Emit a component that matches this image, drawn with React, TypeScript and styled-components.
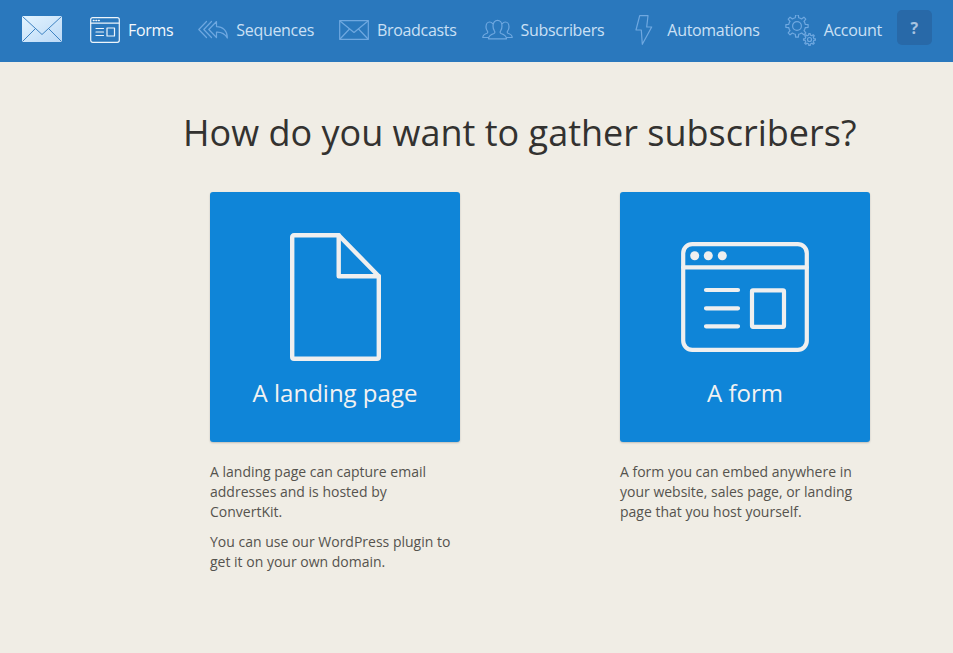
import React from 'react';
import styled, { createGlobalStyle } from 'styled-components';

const GlobalStyle = createGlobalStyle`
  html, body {
    margin: 0;
    padding: 0;
    background-color: #f0ede5;
    font-family: "Open Sans", "Liberation Sans", sans-serif;
  }
`;

const TopBar = styled.nav`
  height: 62px;
  box-sizing: border-box;
  padding: 0 22px;
  display: flex;
  align-items: center;
  background-color: #2a78bd;
`;

const Logo = styled.svg`
  display: block;
  flex: none;
  margin: 0 28px 4px 0;
`;

const NavList = styled.div`
  display: flex;
  align-items: center;
  gap: 25px;
  margin-bottom: 2px;
`;

const NavItem = styled.a<{ $active?: boolean }>`
  display: flex;
  align-items: center;
  gap: 8px;
  font-size: 16px;
  line-height: 22px;
  letter-spacing: -0.31px;
  white-space: nowrap;
  color: ${props => (props.$active ? '#f4f8fc' : '#cbe0f5')};
  svg {
    display: block;
    flex: none;
    fill: none;
    stroke: ${props => (props.$active ? '#eef5fb' : '#6fa8e0')};
    stroke-width: 1.2;
    stroke-linejoin: round;
    stroke-linecap: round;
  }
`;

const HelpButton = styled.button`
  flex: none;
  width: 35px;
  height: 35px;
  margin: 0 0 7px 15px;
  border: 0;
  padding: 0;
  border-radius: 5px;
  background-color: #2869a8;
  color: #a8c3e0;
  font-family: inherit;
  font-size: 16px;
  font-weight: 700;
`;

const Main = styled.main`
  padding: 46px 0 0 183px;
`;

const Title = styled.h1`
  margin: 0 0 34px;
  font-size: 36px;
  line-height: 50px;
  font-weight: 400;
  color: #333230;
`;

const Options = styled.div`
  display: grid;
  grid-template-columns: 250px 250px;
  column-gap: 160px;
  margin-left: 27px;
`;

const OptionCard = styled.a`
  display: block;
`;

const Tile = styled.div`
  height: 250px;
  box-sizing: border-box;
  display: flex;
  flex-direction: column;
  align-items: center;
  border-radius: 3px;
  background-color: #0f85d8;
  box-shadow: 0 1px 2px rgba(0, 0, 0, 0.2);
`;

const IconSlot = styled.div<{ $top: number }>`
  height: 187px;
  box-sizing: border-box;
  padding-top: ${props => props.$top}px;
  svg {
    display: block;
    fill: none;
    stroke: #efefef;
    stroke-linejoin: round;
    stroke-linecap: round;
  }
`;

const TileLabel = styled.div`
  font-size: 24px;
  line-height: 28px;
  color: #f2f2f2;
`;

const Description = styled.p`
  margin: 0 0 10px;
  font-size: 14px;
  line-height: 20px;
  color: #55534e;
  &:first-of-type {
    margin-top: 20px;
  }
`;

const gearPath = (cx: number, cy: number, outer: number, inner: number, teeth: number) => {
  const points: string[] = [];
  const step = (Math.PI * 2) / teeth;
  for (let i = 0; i < teeth; i++) {
    const a = i * step;
    const corners: [number, number][] = [
      [inner, a - step * 0.5],
      [inner, a - step * 0.26],
      [outer, a - step * 0.15],
      [outer, a + step * 0.15],
      [inner, a + step * 0.26]
    ];
    corners.forEach(([r, t]) => {
      points.push(`${(cx + r * Math.cos(t)).toFixed(2)} ${(cy + r * Math.sin(t)).toFixed(2)}`);
    });
  }
  return `M${points.join('L')}Z`;
};

const FormsIcon = () => (
  <svg width="30" height="26" viewBox="0 0 30 26">
    <rect x="0.7" y="0.7" width="28.6" height="24.6" rx="2" />
    <path d="M1 6.2H29" />
    <path d="M6 11.5H13.5M6 15H13.5M6 18.5H13.5" />
    <rect x="17" y="11" width="7.5" height="8" />
    <path d="M3.4 3.5H4M6 3.5H6.6M8.6 3.5H9.2" strokeWidth="1.6" />
  </svg>
);

const SequencesIcon = () => (
  <svg width="30" height="26" viewBox="0 0 30 26">
    <path d="M8.5 4.5L0.8 12.5L8.5 20.5" />
    <path d="M13.5 4.5L5.8 12.5L13.5 20.5" />
    <path d="M18.5 4.5L10.8 12.5L18.5 20.5V15.2C23 15 27 16.8 29.3 21C29.5 14 25 9.6 18.5 9.6Z" />
  </svg>
);

const BroadcastsIcon = () => (
  <svg width="30" height="20" viewBox="0 0 30 20">
    <rect x="0.7" y="0.7" width="28.6" height="18.6" />
    <path d="M1 1L15 12.5L29 1" />
    <path d="M1 19L10.5 9M29 19L19.5 9" />
  </svg>
);

const SubscribersIcon = () => (
  <svg width="31" height="22" viewBox="0 0 31 22">
    <path d="M6.5 18.5H0.8C0.8 16 2.6 15 5 14.2C6 13.8 5.8 12.6 5.3 12C4.4 10.8 4 9.6 4 8C4 5.2 5.6 3 7.6 3C8.8 3 9.8 3.6 10.6 4.6" />
    <path d="M24.5 18.5H30.2C30.2 16 28.4 15 26 14.2C25 13.8 25.2 12.6 25.7 12C26.6 10.8 27 9.6 27 8C27 5.2 25.4 3 23.4 3C22.2 3 21.2 3.6 20.4 4.6" />
    <path d="M6.5 19.8C6.5 16.5 9 15.5 12 14.5C13.2 14 13 12.6 12.4 11.8C11.4 10.4 11 9 11 7C11 3.6 13 1.4 15.5 1.4C18 1.4 20 3.6 20 7C20 9 19.6 10.4 18.6 11.8C18 12.6 17.8 14 19 14.5C22 15.5 24.5 16.5 24.5 19.8Z" />
  </svg>
);

const AutomationsIcon = () => (
  <svg width="30" height="30" viewBox="0 0 30 30">
    <path d="M10.7 0.7L7 15H12.3L13.3 29.3L22.7 12H17.7L19 0.7Z" />
  </svg>
);

const AccountIcon = () => (
  <svg width="31" height="31" viewBox="0 0 31 31">
    <path d={gearPath(12, 11, 11.2, 8.4, 8)} />
    <circle cx="12" cy="11" r="4.4" />
    <path d={gearPath(24.5, 24.5, 6, 4.4, 8)} />
    <circle cx="24.5" cy="24.5" r="2" />
  </svg>
);

const PageIcon = () => (
  <svg width="91" height="128" viewBox="0 0 91 128" strokeWidth="4.4">
    <path d="M4 2.2H48.7L88.8 43.3V124A1.8 1.8 0 0 1 87 125.8H4A1.8 1.8 0 0 1 2.2 124V4A1.8 1.8 0 0 1 4 2.2Z" />
    <path d="M48.7 2.2V43.3H88.8" />
  </svg>
);

const FormIcon = () => (
  <svg width="128" height="110" viewBox="0 0 128 110" strokeWidth="4.2">
    <rect x="2.2" y="2.2" width="123.6" height="105.6" rx="9" />
    <path d="M2.2 25.3H125.8" />
    <path d="M25 48H57M25 66.3H57M25 84.3H57" />
    <rect x="71" y="48.4" width="32" height="36.4" rx="1" />
    <g fill="#efefef" stroke="none">
      <circle cx="13.7" cy="13.7" r="4.5" />
      <circle cx="27.3" cy="13.7" r="4.5" />
      <circle cx="41.3" cy="13.7" r="4.5" />
    </g>
  </svg>
);

const App: React.FC = () => {
  return (
    <>
      <GlobalStyle />
      <TopBar>
        <Logo width="40" height="26" viewBox="0 0 40 26">
          <defs>
            <linearGradient id="envelope" x1="0" y1="0" x2="1" y2="1">
              <stop offset="0" stopColor="#e3f4ff" />
              <stop offset="1" stopColor="#bcd9f6" />
            </linearGradient>
          </defs>
          <rect width="40" height="26" rx="1" fill="url(#envelope)" />
          <path
            d="M0.5 0.5L20 18.5L39.5 0.5M0.5 25.5L13.5 12.5M39.5 25.5L26.5 12.5"
            fill="none"
            stroke="#3f83c2"
            strokeWidth="1"
          />
        </Logo>
        <NavList>
          <NavItem $active><FormsIcon />Forms</NavItem>
          <NavItem><SequencesIcon />Sequences</NavItem>
          <NavItem><BroadcastsIcon />Broadcasts</NavItem>
          <NavItem><SubscribersIcon />Subscribers</NavItem>
          <NavItem><AutomationsIcon />Automations</NavItem>
          <NavItem><AccountIcon />Account</NavItem>
        </NavList>
        <HelpButton>?</HelpButton>
      </TopBar>
      <Main>
        <Title>How do you want to gather subscribers?</Title>
        <Options>
          <OptionCard>
            <Tile>
              <IconSlot $top={41}><PageIcon /></IconSlot>
              <TileLabel>A landing page</TileLabel>
            </Tile>
            <Description>A landing page can capture email addresses and is hosted by ConvertKit.</Description>
            <Description>You can use our WordPress plugin to get it on your own domain.</Description>
          </OptionCard>
          <OptionCard>
            <Tile>
              <IconSlot $top={50}><FormIcon /></IconSlot>
              <TileLabel>A form</TileLabel>
            </Tile>
            <Description>A form you can embed anywhere in your website, sales page, or landing page that you host yourself.</Description>
          </OptionCard>
        </Options>
      </Main>
    </>
  );
};

export default App;
